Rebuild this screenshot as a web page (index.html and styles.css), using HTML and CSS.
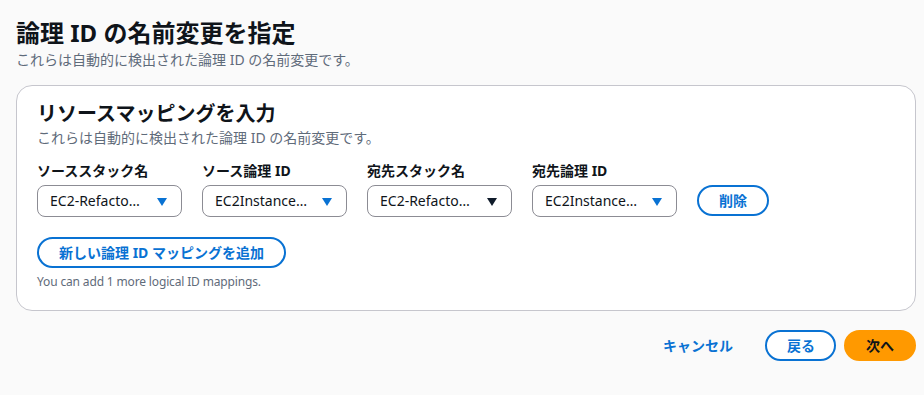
FILE: index.html
```html
<!DOCTYPE html>
<html lang="ja">
<head>
<meta charset="utf-8">
<link rel="stylesheet" href="styles.css">
</head>
<body>
<div class="page">
  <header class="page-header">
    <h1 class="page-title">論理 ID の名前変更を指定</h1>
    <p class="page-desc">これらは自動的に検出された論理 ID の名前変更です。</p>
  </header>

  <section class="card">
    <h2 class="card-title">リソースマッピングを入力</h2>
    <p class="card-desc">これらは自動的に検出された論理 ID の名前変更です。</p>

    <div class="mapping-row">
      <div class="field">
        <label class="field-label">ソーススタック名</label>
        <div class="select"><span class="select-value">EC2-Refacto…</span><span class="caret"></span></div>
      </div>
      <div class="field">
        <label class="field-label">ソース論理 ID</label>
        <div class="select"><span class="select-value">EC2Instance…</span><span class="caret"></span></div>
      </div>
      <div class="field">
        <label class="field-label">宛先スタック名</label>
        <div class="select"><span class="select-value">EC2-Refacto…</span><span class="caret caret-dark"></span></div>
      </div>
      <div class="field">
        <label class="field-label">宛先論理 ID</label>
        <div class="select"><span class="select-value">EC2Instance…</span><span class="caret"></span></div>
      </div>
      <button class="btn btn-normal btn-delete">削除</button>
    </div>

    <div class="add-block">
      <button class="btn btn-normal btn-add">新しい論理 ID マッピングを追加</button>
      <p class="hint">You can add 1 more logical ID mappings.</p>
    </div>
  </section>

  <footer class="actions">
    <button class="btn btn-link">キャンセル</button>
    <button class="btn btn-normal btn-back">戻る</button>
    <button class="btn btn-primary">次へ</button>
  </footer>
</div>
</body>
</html>
```

FILE: styles.css
```css
* { box-sizing: border-box; }

html, body {
  margin: 0;
  padding: 0;
  background: #fafafa;
}

body {
  font-family: "Noto Sans", "Noto Sans CJK JP", sans-serif;
  color: #0f141a;
  font-size: 14px;
  line-height: 20px;
}

.page {
  padding: 18px 8px 0 16px;
}

.page-title {
  margin: 0;
  font-size: 24px;
  line-height: 30px;
  font-weight: 700;
  color: #0f141a;
}

.page-desc {
  margin: 2px 0 0;
  font-size: 14px;
  line-height: 20px;
  color: #5f6b7a;
}

.card {
  margin-top: 15px;
  background: #ffffff;
  border: 1px solid #c6c6cd;
  border-radius: 16px;
  padding: 16px 20px 20px;
}

.card-title {
  margin: 0;
  font-size: 20px;
  line-height: 24px;
  font-weight: 700;
}

.card-desc {
  margin: 2px 0 0;
  color: #5f6b7a;
}

.mapping-row {
  margin-top: 13px;
  display: flex;
  align-items: flex-end;
  gap: 20px;
}

.field {
  display: flex;
  flex-direction: column;
  gap: 4px;
}

.field-label {
  font-weight: 700;
  font-size: 14px;
  line-height: 20px;
}

.select {
  width: 145px;
  height: 32px;
  border: 1px solid #8c8c94;
  border-radius: 8px;
  background: #fff;
  display: flex;
  align-items: center;
  justify-content: space-between;
  padding: 0 14px 0 12px;
}

.select-value {
  white-space: nowrap;
  color: #0f141a;
}

.caret {
  width: 0;
  height: 0;
  border-left: 5.5px solid transparent;
  border-right: 5.5px solid transparent;
  border-top: 8px solid #0972d3;
  margin-top: 1px;
}

.caret-dark {
  border-top-color: #0f1b2a;
}

.btn {
  font-family: inherit;
  font-size: 14px;
  line-height: 20px;
  font-weight: 700;
  cursor: pointer;
  border-radius: 20px;
  white-space: nowrap;
}

.btn-normal {
  background: #fff;
  color: #0972d3;
  border: 2px solid #0972d3;
  padding: 3px 20px;
}

.btn-delete {
  height: 31px;
  width: 72px;
  margin-bottom: 1px;
}

.add-block {
  margin-top: 20px;
}

.btn-add {
  height: 31px;
  width: 249px;
}

.hint {
  margin: 6px 0 0;
  font-size: 12px;
  line-height: 16px;
  color: #5f6b7a;
  letter-spacing: -0.15px;
}

.actions {
  margin-top: 19px;
  display: flex;
  justify-content: flex-end;
  align-items: center;
  gap: 8px;
}

.btn-link {
  background: transparent;
  border: 2px solid transparent;
  color: #0972d3;
  padding: 3px 22px;
  height: 31px;
}

.btn-back {
  width: 71px;
  height: 31px;
}

.btn-primary {
  background: #ff9900;
  border: 2px solid #ff9900;
  color: #0f141a;
  width: 72px;
  height: 31px;
  padding: 3px 20px;
}
```
